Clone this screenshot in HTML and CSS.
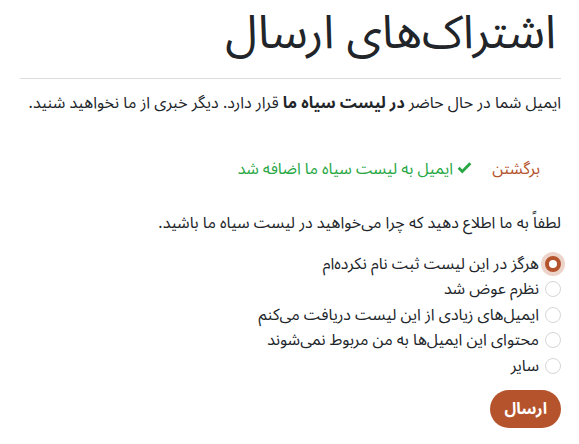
FILE: index.html
```html
<!DOCTYPE html>
<html lang="fa" dir="rtl">
<head>
<meta charset="utf-8">
<title>اشتراک‌های ارسال</title>
<link rel="stylesheet" href="styles.css">
</head>
<body>
<div class="container">
  <h1 class="title">اشتراک‌های ارسال</h1>
  <hr class="rule">
  <p class="lead-text">ایمیل شما در حال حاضر <strong>در لیست سیاه ما</strong> قرار دارد. دیگر خبری از ما نخواهید شنید.</p>
  <div class="status-row">
    <a class="back-link" href="#">برگشتن</a>
    <span class="success"><svg class="check" viewBox="0 0 16 14" width="15" height="13"><path d="M0.6 7.3 L5.6 12.3 L15.4 2.5 L13.2 0.4 L5.6 8.0 L2.8 5.2 Z" fill="#28a745"/></svg> ایمیل به لیست سیاه ما اضافه شد</span>
  </div>
  <form class="reason-form">
    <p class="question">لطفاً به ما اطلاع دهید که چرا می‌خواهید در لیست سیاه ما باشید.</p>
    <div class="options">
      <label class="option"><input type="radio" name="r" class="radio" checked><span>هرگز در این لیست ثبت نام نکرده‌ام</span></label>
      <label class="option"><input type="radio" name="r" class="radio"><span>نظرم عوض شد</span></label>
      <label class="option"><input type="radio" name="r" class="radio"><span>ایمیل‌های زیادی از این لیست دریافت می‌کنم</span></label>
      <label class="option"><input type="radio" name="r" class="radio"><span>محتوای این ایمیل‌ها به من مربوط نمی‌شوند</span></label>
      <label class="option"><input type="radio" name="r" class="radio"><span>سایر</span></label>
    </div>
    <button type="button" class="submit">ارسال</button>
  </form>
</div>
</body>
</html>
```
FILE: styles.css
```css
html, body {
  margin: 0;
  padding: 0;
  background: #fff;
}
body {
  font-family: "Noto Sans Arabic", "Noto Sans", sans-serif;
  font-size: 16px;
  line-height: 1.5;
  color: #212529;
}
.container {
  padding: 0 18px 0 20px;
}
.title {
  margin: 0;
  padding: 6px 5px 0 0;
  font-size: 46.5px;
  font-weight: 400;
  line-height: 1.2;
}
.rule {
  margin: 16px 0 12px;
  border: 0;
  border-top: 1px solid #dcdcdc;
}
.lead-text {
  margin: 0 0 42px;
}
.status-row {
  display: flex;
  gap: 20px;
  padding-right: 21px;
  margin-bottom: 30px;
}
.back-link {
  color: #b5532c;
  text-decoration: none;
}
.success {
  color: #28a745;
}
.check {
  vertical-align: -1px;
}
.question {
  margin: 0 0 17px;
}
.options {
  display: flex;
  flex-direction: column;
  gap: 1.5px;
}
.option {
  display: flex;
  align-items: center;
  gap: 6px;
}
.radio {
  appearance: none;
  width: 16px;
  height: 16px;
  margin: 0;
  border: 1px solid #d6d6d6;
  border-radius: 50%;
  background: #fff;
}
.radio:checked {
  border: 4.5px solid #b5532c;
  box-shadow: 0 0 0 4px rgba(181, 83, 44, 0.25);
}
.submit {
  margin-top: 12px;
  height: 38px;
  padding: 0 14px;
  border: 0;
  border-radius: 19px;
  background: #b5532c;
  color: #fff;
  font-family: inherit;
  font-size: 16px;
  font-weight: 700;
}
```
